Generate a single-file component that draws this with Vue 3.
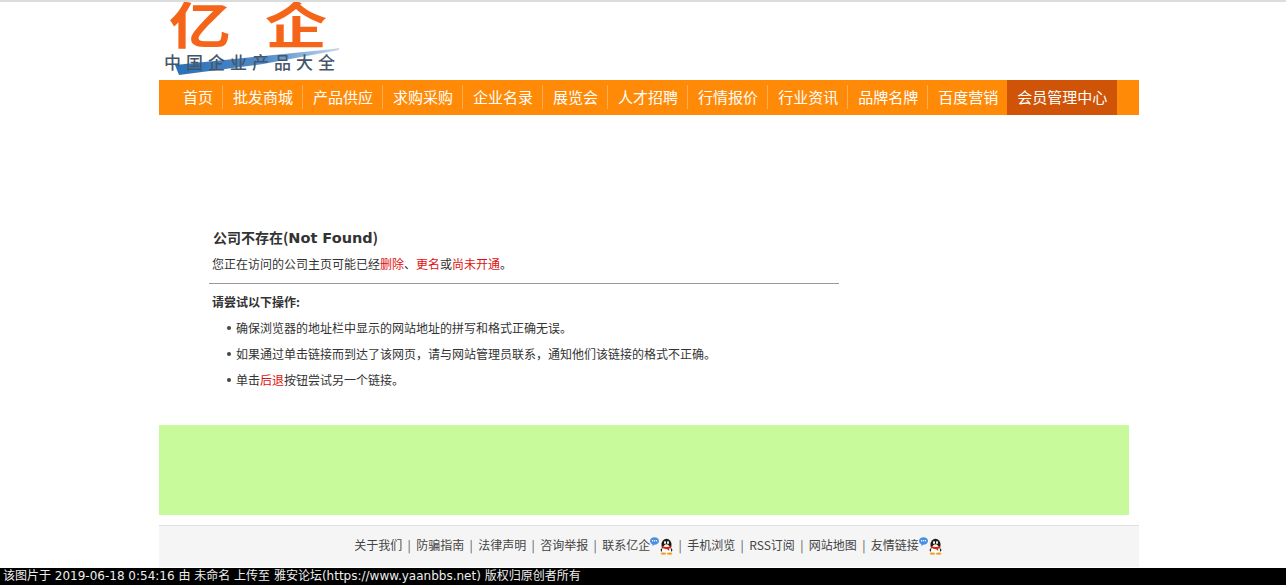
<script setup>
const nav = ['首页','批发商城','产品供应','求购采购','企业名录','展览会','人才招聘','行情报价','行业资讯','品牌名牌','百度营销']
const links = [
  { t: '关于我们' }, { t: '防骗指南' }, { t: '法律声明' }, { t: '咨询举报' },
  { t: '联系亿企', qq: true }, { t: '手机浏览' }, { t: 'RSS订阅' }, { t: '网站地图' },
  { t: '友情链接', qq: true, last: true }
]
</script>

<template>
  <div class="page">
    <div class="wrap">
      <div class="logo">
        <svg class="swoosh" width="180" height="30" viewBox="0 0 180 30">
          <defs>
            <linearGradient id="sw" x1="0" x2="1" y1="0" y2="0">
              <stop offset="0" stop-color="#2a70b8"/>
              <stop offset="0.55" stop-color="#4f8cca"/>
              <stop offset="1" stop-color="#c4d6ee"/>
            </linearGradient>
          </defs>
          <path d="M12 20 L170 4 L176 3 L176 5 L100 19 L16 30 Z" fill="url(#sw)"/>
        </svg>
        <div class="brand"><span>亿</span><span>企</span></div>
        <div class="slogan">中国企业产品大全</div>
      </div>
      <nav class="nav">
        <a v-for="n in nav" :key="n" class="item">{{ n }}</a>
        <a class="item active">会员管理中心</a>
      </nav>
    </div>

    <div class="wrap">
      <main class="content">
        <h1>公司不存在(<span class="latin">Not Found</span>)</h1>
        <p class="lead">您正在访问的公司主页可能已经<em>删除</em>、<em>更名</em>或<em>尚未开通</em>。</p>
        <hr />
        <h2>请尝试以下操作:</h2>
        <ul>
          <li>确保浏览器的地址栏中显示的网站地址的拼写和格式正确无误。</li>
          <li>如果通过单击链接而到达了该网页，请与网站管理员联系，通知他们该链接的格式不正确。</li>
          <li>单击<em>后退</em>按钮尝试另一个链接。</li>
        </ul>
      </main>
      <div class="banner"></div>
      <footer class="foot">
        <template v-for="l in links" :key="l.t">
          <a>{{ l.t }}</a>
          <svg v-if="l.qq" class="qq" width="23" height="18" viewBox="0 0 23 18">
            <path d="M0 4 a4.5 3.8 0 0 1 9 0 a4.5 3.8 0 0 1 -5 3.8 l-1.5 1.4 v-1.8 A3.8 3.8 0 0 1 0 4z" fill="#4a90e0"/>
            <circle cx="2.6" cy="3.8" r=".7" fill="#fff"/><circle cx="4.5" cy="3.8" r=".7" fill="#fff"/><circle cx="6.4" cy="3.8" r=".7" fill="#fff"/>
            <ellipse cx="16.5" cy="8" rx="5" ry="6.2" fill="#1a1a1a"/>
            <ellipse cx="16.5" cy="12" rx="4" ry="4.4" fill="#fff"/>
            <ellipse cx="15" cy="5.4" rx="1" ry="1.5" fill="#fff"/><ellipse cx="18" cy="5.4" rx="1" ry="1.5" fill="#fff"/>
            <path d="M15 7 h3 l-1.5 1.5z" fill="#f0a020"/>
            <path d="M11.8 9 q4.7 2.2 9.4 0 v1.8 q-1 .6 -2 .8 v2.4 l-2-1.8 q-2.8 0 -5.4 -1.4z" fill="#d0281c"/>
            <path d="M10.4 13 l1.6 -2 v4z M22.6 13 l-1.6 -2 v4z" fill="#1a1a1a"/>
            <ellipse cx="13.4" cy="16.6" rx="2.8" ry="1.2" fill="#f0a020"/><ellipse cx="19.6" cy="16.6" rx="2.8" ry="1.2" fill="#f0a020"/>
          </svg>
          <i v-if="!l.last">|</i>
        </template>
      </footer>
    </div>
    <div class="credit">该图片于 2019-06-18 0:54:16 由 未命名 上传至 雅安论坛(https://www.yaanbbs.net) 版权归原创者所有</div>
  </div>
</template>

<style scoped>
.page {
  height: 585px;
  box-sizing: border-box;
  border-top: 2px solid #dcdcdc;
  overflow: hidden;
  background: #fff;
  font-family: "Noto Sans CJK SC", sans-serif;
  color: #333;
}
.wrap { width: 980px; margin-left: 159px; }
.logo { height: 78px; position: relative; overflow: hidden; }
.brand {
  position: absolute; left: 10px; top: -2px;
  display: flex; gap: 34px;
  font-size: 62px; line-height: 56px; font-weight: 700; color: #f4651a;
  transform: scaleY(.8); transform-origin: 0 0;
}
.slogan {
  position: absolute; left: 5px; top: 49px;
  font-size: 17px; line-height: 22px; letter-spacing: 5px; color: #46566a; font-weight: 500; white-space: nowrap;
}
.swoosh { position: absolute; left: 4px; top: 43px; }
.nav {
  height: 35px; background: #ff8a08; display: flex; padding-left: 14px;
  font-size: 15px; line-height: 34px; color: #fff;
}
.item { padding: 0 10px; position: relative; }
.item::after {
  content: ""; position: absolute; right: 0; top: 5px; height: 24px; width: 1px; background: #ffab52;
}
.item:nth-last-child(2)::after, .item.active::after { display: none; }
.active { background: #cf5408; margin-left: -1px; }
.content { height: 310px; box-sizing: border-box; padding: 112px 0 0 50px; width: 680px; font-size: 12px; }
h1 { margin: 0 0 0 4px; font-size: 14px; line-height: 20px; font-weight: 700; color: #333; }
.latin { font-family: "DejaVu Sans", sans-serif; font-size: 14.5px; }
.lead { margin: 6px 0 0 3px; line-height: 20px; }
em { font-style: normal; color: #e01010; }
hr { border: 0; border-top: 1px solid #999; margin: 9px 0 0 0; width: 630px; }
h2 { margin: 8px 0 0 3px; font-size: 12px; line-height: 20px; font-weight: 700; }
ul { margin: 3px 0 0; padding: 0 0 0 27px; list-style: none; }
li { line-height: 26px; white-space: nowrap; position: relative; }
li::before {
  content: ""; position: absolute; left: -9px; top: 11px; width: 4px; height: 4px; border-radius: 50%; background: #444;
}
.banner { width: 970px; height: 90px; background: #c8f99a; }
.foot {
  margin-top: 10px; height: 42px; box-sizing: border-box;
  border-top: 1px solid #e0e0e0; background: #f5f5f5;
  display: flex; justify-content: center; align-items: center;
  font-size: 12px; color: #444; white-space: nowrap; padding: 0 2px 4px 0;
}
.foot i { font-style: normal; width: 14px; text-align: center; color: #555; }
.qq { flex: none; margin-top: 2px; }
.credit {
  margin-top: 1px; height: 17px; background: #000; color: #eee;
  font-family: "DejaVu Sans", "Noto Sans CJK SC", sans-serif;
  font-size: 12px; line-height: 17px; padding-left: 3px; white-space: nowrap;
}
</style>
